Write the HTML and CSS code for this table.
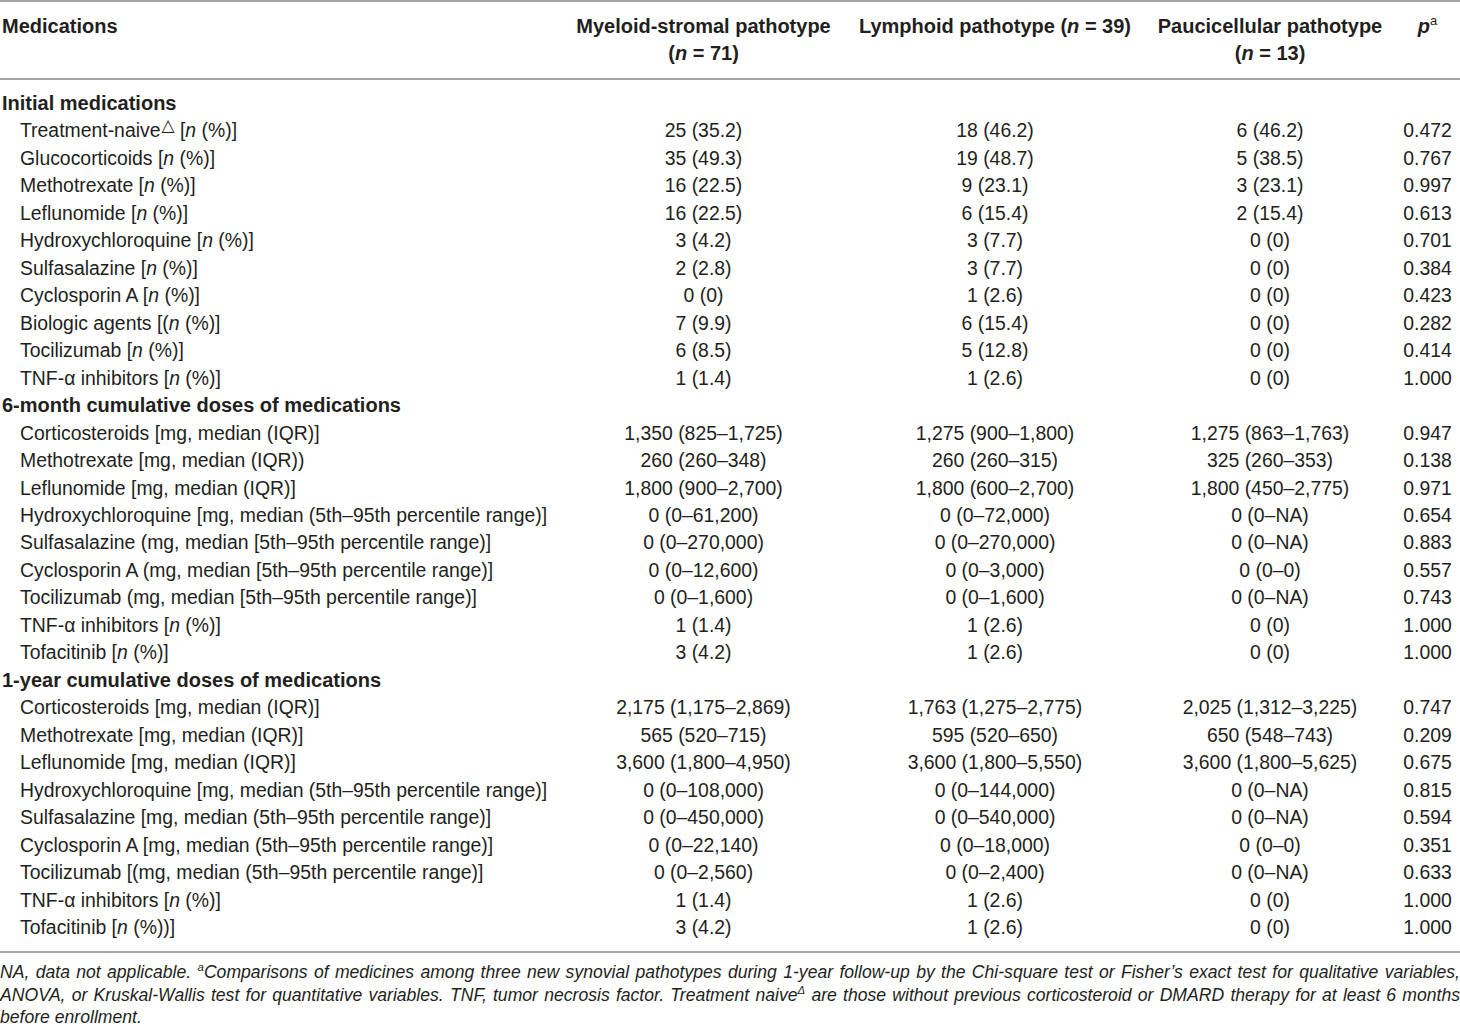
FILE: index.html
```html
<!DOCTYPE html>
<html>

<head>
    <meta name="viewport" content="width=device-width, initial-scale=1">
    <title>Medications by synovial pathotype</title>
    <link rel="stylesheet" href="styles.css">
</head>

<body>
    <table class="meds">
        <colgroup>
            <col class="c-label">
            <col class="c-myeloid">
            <col class="c-lymphoid">
            <col class="c-pauci">
            <col class="c-p">
        </colgroup>
        <thead>
            <tr>
                <th class="left">Medications</th>
                <th>Myeloid-stromal pathotype<br>(<i>n</i> = 71)</th>
                <th>Lymphoid pathotype (<i>n</i> = 39)</th>
                <th>Paucicellular pathotype<br>(<i>n</i> = 13)</th>
                <th><i>p</i><sup>a</sup></th>
            </tr>
        </thead>
        <tbody>
            <tr class="section first"><th colspan="5">Initial medications</th></tr>
            <tr><td>Treatment-naive<sup class="tri">△</sup> [<i>n</i> (%)]</td><td>25 (35.2)</td><td>18 (46.2)</td><td>6 (46.2)</td><td>0.472</td></tr>
            <tr><td>Glucocorticoids [<i>n</i> (%)]</td><td>35 (49.3)</td><td>19 (48.7)</td><td>5 (38.5)</td><td>0.767</td></tr>
            <tr><td>Methotrexate [<i>n</i> (%)]</td><td>16 (22.5)</td><td>9 (23.1)</td><td>3 (23.1)</td><td>0.997</td></tr>
            <tr><td>Leflunomide [<i>n</i> (%)]</td><td>16 (22.5)</td><td>6 (15.4)</td><td>2 (15.4)</td><td>0.613</td></tr>
            <tr><td>Hydroxychloroquine [<i>n</i> (%)]</td><td>3 (4.2)</td><td>3 (7.7)</td><td>0 (0)</td><td>0.701</td></tr>
            <tr><td>Sulfasalazine [<i>n</i> (%)]</td><td>2 (2.8)</td><td>3 (7.7)</td><td>0 (0)</td><td>0.384</td></tr>
            <tr><td>Cyclosporin A [<i>n</i> (%)]</td><td>0 (0)</td><td>1 (2.6)</td><td>0 (0)</td><td>0.423</td></tr>
            <tr><td>Biologic agents [(<i>n</i> (%)]</td><td>7 (9.9)</td><td>6 (15.4)</td><td>0 (0)</td><td>0.282</td></tr>
            <tr><td>Tocilizumab [<i>n</i> (%)]</td><td>6 (8.5)</td><td>5 (12.8)</td><td>0 (0)</td><td>0.414</td></tr>
            <tr><td>TNF-α inhibitors [<i>n</i> (%)]</td><td>1 (1.4)</td><td>1 (2.6)</td><td>0 (0)</td><td>1.000</td></tr>

            <tr class="section"><th colspan="5">6-month cumulative doses of medications</th></tr>
            <tr><td>Corticosteroids [mg, median (IQR)]</td><td>1,350 (825–1,725)</td><td>1,275 (900–1,800)</td><td>1,275 (863–1,763)</td><td>0.947</td></tr>
            <tr><td>Methotrexate [mg, median (IQR))</td><td>260 (260–348)</td><td>260 (260–315)</td><td>325 (260–353)</td><td>0.138</td></tr>
            <tr><td>Leflunomide [mg, median (IQR)]</td><td>1,800 (900–2,700)</td><td>1,800 (600–2,700)</td><td>1,800 (450–2,775)</td><td>0.971</td></tr>
            <tr><td>Hydroxychloroquine [mg, median (5th–95th percentile range)]</td><td>0 (0–61,200)</td><td>0 (0–72,000)</td><td>0 (0–NA)</td><td>0.654</td></tr>
            <tr><td>Sulfasalazine (mg, median [5th–95th percentile range)]</td><td>0 (0–270,000)</td><td>0 (0–270,000)</td><td>0 (0–NA)</td><td>0.883</td></tr>
            <tr><td>Cyclosporin A (mg, median [5th–95th percentile range)]</td><td>0 (0–12,600)</td><td>0 (0–3,000)</td><td>0 (0–0)</td><td>0.557</td></tr>
            <tr><td>Tocilizumab (mg, median [5th–95th percentile range)]</td><td>0 (0–1,600)</td><td>0 (0–1,600)</td><td>0 (0–NA)</td><td>0.743</td></tr>
            <tr><td>TNF-α inhibitors [<i>n</i> (%)]</td><td>1 (1.4)</td><td>1 (2.6)</td><td>0 (0)</td><td>1.000</td></tr>
            <tr><td>Tofacitinib [<i>n</i> (%)]</td><td>3 (4.2)</td><td>1 (2.6)</td><td>0 (0)</td><td>1.000</td></tr>

            <tr class="section"><th colspan="5">1-year cumulative doses of medications</th></tr>
            <tr><td>Corticosteroids [mg, median (IQR)]</td><td>2,175 (1,175–2,869)</td><td>1,763 (1,275–2,775)</td><td>2,025 (1,312–3,225)</td><td>0.747</td></tr>
            <tr><td>Methotrexate [mg, median (IQR)]</td><td>565 (520–715)</td><td>595 (520–650)</td><td>650 (548–743)</td><td>0.209</td></tr>
            <tr><td>Leflunomide [mg, median (IQR)]</td><td>3,600 (1,800–4,950)</td><td>3,600 (1,800–5,550)</td><td>3,600 (1,800–5,625)</td><td>0.675</td></tr>
            <tr><td>Hydroxychloroquine [mg, median (5th–95th percentile range)]</td><td>0 (0–108,000)</td><td>0 (0–144,000)</td><td>0 (0–NA)</td><td>0.815</td></tr>
            <tr><td>Sulfasalazine [mg, median (5th–95th percentile range)]</td><td>0 (0–450,000)</td><td>0 (0–540,000)</td><td>0 (0–NA)</td><td>0.594</td></tr>
            <tr><td>Cyclosporin A [mg, median (5th–95th percentile range)]</td><td>0 (0–22,140)</td><td>0 (0–18,000)</td><td>0 (0–0)</td><td>0.351</td></tr>
            <tr><td>Tocilizumab [(mg, median (5th–95th percentile range)]</td><td>0 (0–2,560)</td><td>0 (0–2,400)</td><td>0 (0–NA)</td><td>0.633</td></tr>
            <tr><td>TNF-α inhibitors [<i>n</i> (%)]</td><td>1 (1.4)</td><td>1 (2.6)</td><td>0 (0)</td><td>1.000</td></tr>
            <tr class="last"><td>Tofacitinib [<i>n</i> (%))]</td><td>3 (4.2)</td><td>1 (2.6)</td><td>0 (0)</td><td>1.000</td></tr>
        </tbody>
    </table>

    <p class="notes">NA, data not applicable. <sup>a</sup>Comparisons of medicines among three new synovial pathotypes during 1-year follow-up by the Chi-square test or Fisher’s exact test for qualitative variables, ANOVA, or Kruskal-Wallis test for quantitative variables. TNF, tumor necrosis factor. Treatment naive<sup>Δ</sup> are those without previous corticosteroid or DMARD therapy for at least 6 months before enrollment.</p>
</body>

</html>
```

FILE: styles.css
```css
body {
    margin: 0;
    font-family: 'Liberation Sans', Arial, sans-serif;
    color: #231f20;
    background-color: #fff;
}

.meds {
    width: 1460px;
    table-layout: fixed;
    border-collapse: collapse;
    font-size: 19.4px;
    line-height: 27.47px;
    border-top: 2px solid #a6a6a6;
    border-bottom: 2px solid #a6a6a6;
}

.c-label { width: 562px; }
.c-myeloid { width: 283px; }
.c-lymphoid { width: 300px; }
.c-pauci { width: 250px; }
.c-p { width: 65px; }

.meds thead th {
    font-size: 20px;
    font-weight: bold;
    text-align: center;
    vertical-align: top;
    padding: 11px 0 10px;
    border-bottom: 2px solid #a6a6a6;
    white-space: nowrap;
}

.meds thead th.left {
    text-align: left;
    padding-left: 2px;
}

.meds td {
    padding: 0;
    text-align: center;
    white-space: nowrap;
}

.meds td:first-child {
    text-align: left;
    padding-left: 20px;
}

.section th {
    font-size: 20px;
    text-align: left;
    font-weight: bold;
    padding: 0 0 0 2px;
}

.section.first th {
    padding-top: 10px;
}

.last td {
    padding-bottom: 10px;
}

sup {
    font-size: 0.65em;
    line-height: 0;
    vertical-align: 0.6em;
}

thead sup {
    font-weight: normal;
}

sup.tri {
    font-family: 'DejaVu Sans', sans-serif;
    font-size: 17px;
    vertical-align: 0.35em;
    padding-left: 1px;
}

.notes {
    margin: 8px 0 0;
    font-size: 17.6px;
    line-height: 22.5px;
    font-style: italic;
    text-align: justify;
}
```
